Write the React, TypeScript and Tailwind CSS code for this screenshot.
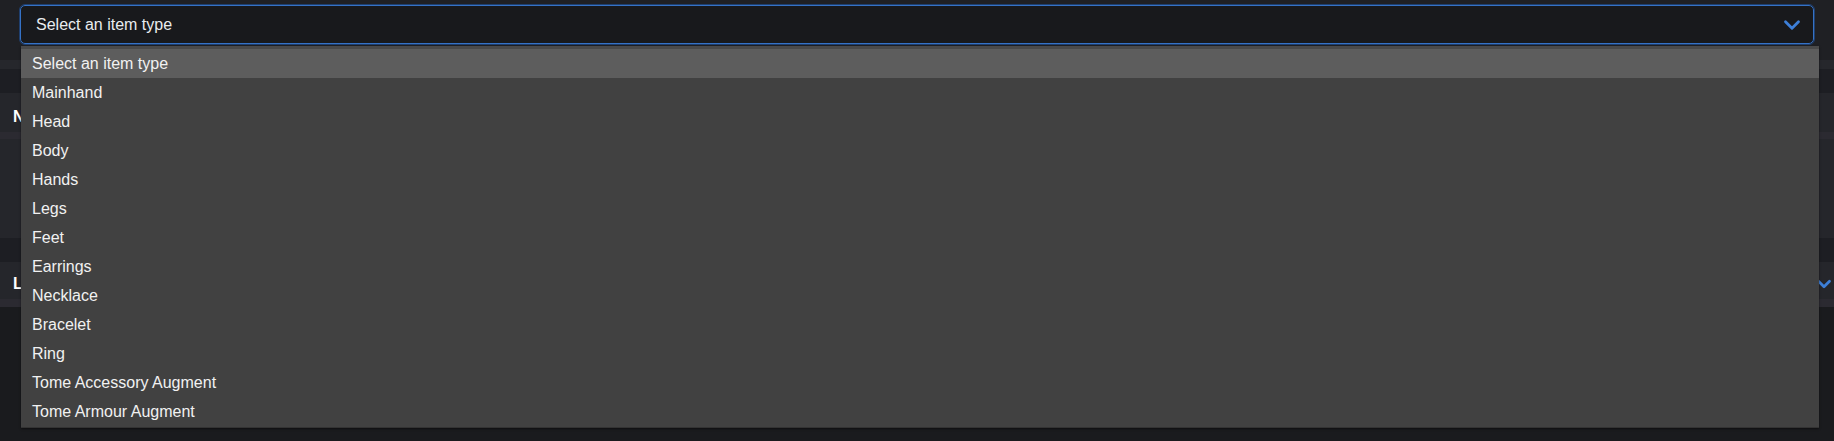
import { ChevronDown } from 'lucide-react'

const ITEM_TYPES = [
    'Select an item type',
    'Mainhand',
    'Head',
    'Body',
    'Hands',
    'Legs',
    'Feet',
    'Earrings',
    'Necklace',
    'Bracelet',
    'Ring',
    'Tome Accessory Augment',
    'Tome Armour Augment',
]

export default function App() {
    return (
        <div
            className="relative h-[441px] w-[1834px] overflow-hidden bg-[#1a1b1e] text-[16px] text-[#e9ecef]"
            style={{ fontFamily: '"Liberation Sans", Arial, sans-serif' }}
        >
            {/* page behind the open select */}
            <div className="flex h-[60px] items-start bg-[#1f2024] px-[20px] pt-[5px]">
                <button className="flex h-[39px] w-full items-center justify-between rounded-[5px] border border-[#3572c6] bg-[#18191c] pl-[15px] pr-[8px] text-left text-[#e9ecef] outline outline-1 outline-[#1f3f6e]">
                    <span>Select an item type</span>
                    <ChevronDown size={26} strokeWidth={2.6} className="text-[#3d7fd8]" />
                </button>
            </div>
            <div className="h-[9px] bg-[#26272c]" />
            <div className="h-[24px] bg-[#1d1e23]" />
            <div className="flex h-[39px] items-center bg-[#25262b] pl-[13px] pt-[9px] font-bold text-white">Name</div>
            <div className="h-[7px] bg-[#2b2a31]" />
            <div className="h-[99px] bg-[#25262b]" />
            <div className="h-[24px] bg-[#1d1e23]" />
            <div className="flex h-[37px] items-center justify-between bg-[#25262b] pl-[13px] pt-[7px] font-bold text-white">
                <span>Level</span>
                <ChevronDown size={22} strokeWidth={3} className="-mr-[1px] text-[#3d7fd8]" />
            </div>
            <div className="h-[8px] bg-[#2b2a31]" />

            {/* native select popup */}
            <ul className="absolute left-[21px] top-[46px] w-[1798px] border-t-[3px] border-b border-t-[#4a4a4a] border-b-[#333333] bg-[#414141] pb-[1px] shadow-[0_1px_2px_rgba(0,0,0,0.5)]">
                {ITEM_TYPES.map((label, i) => (
                    <li
                        key={label}
                        className={
                            i === 0
                                ? 'flex h-[29px] items-center bg-[#5d5d5d] pl-[11px] text-[#f1f1f1]'
                                : 'flex h-[29px] items-center pl-[11px] text-[#f1f1f1]'
                        }
                    >
                        {label}
                    </li>
                ))}
            </ul>
        </div>
    )
}
